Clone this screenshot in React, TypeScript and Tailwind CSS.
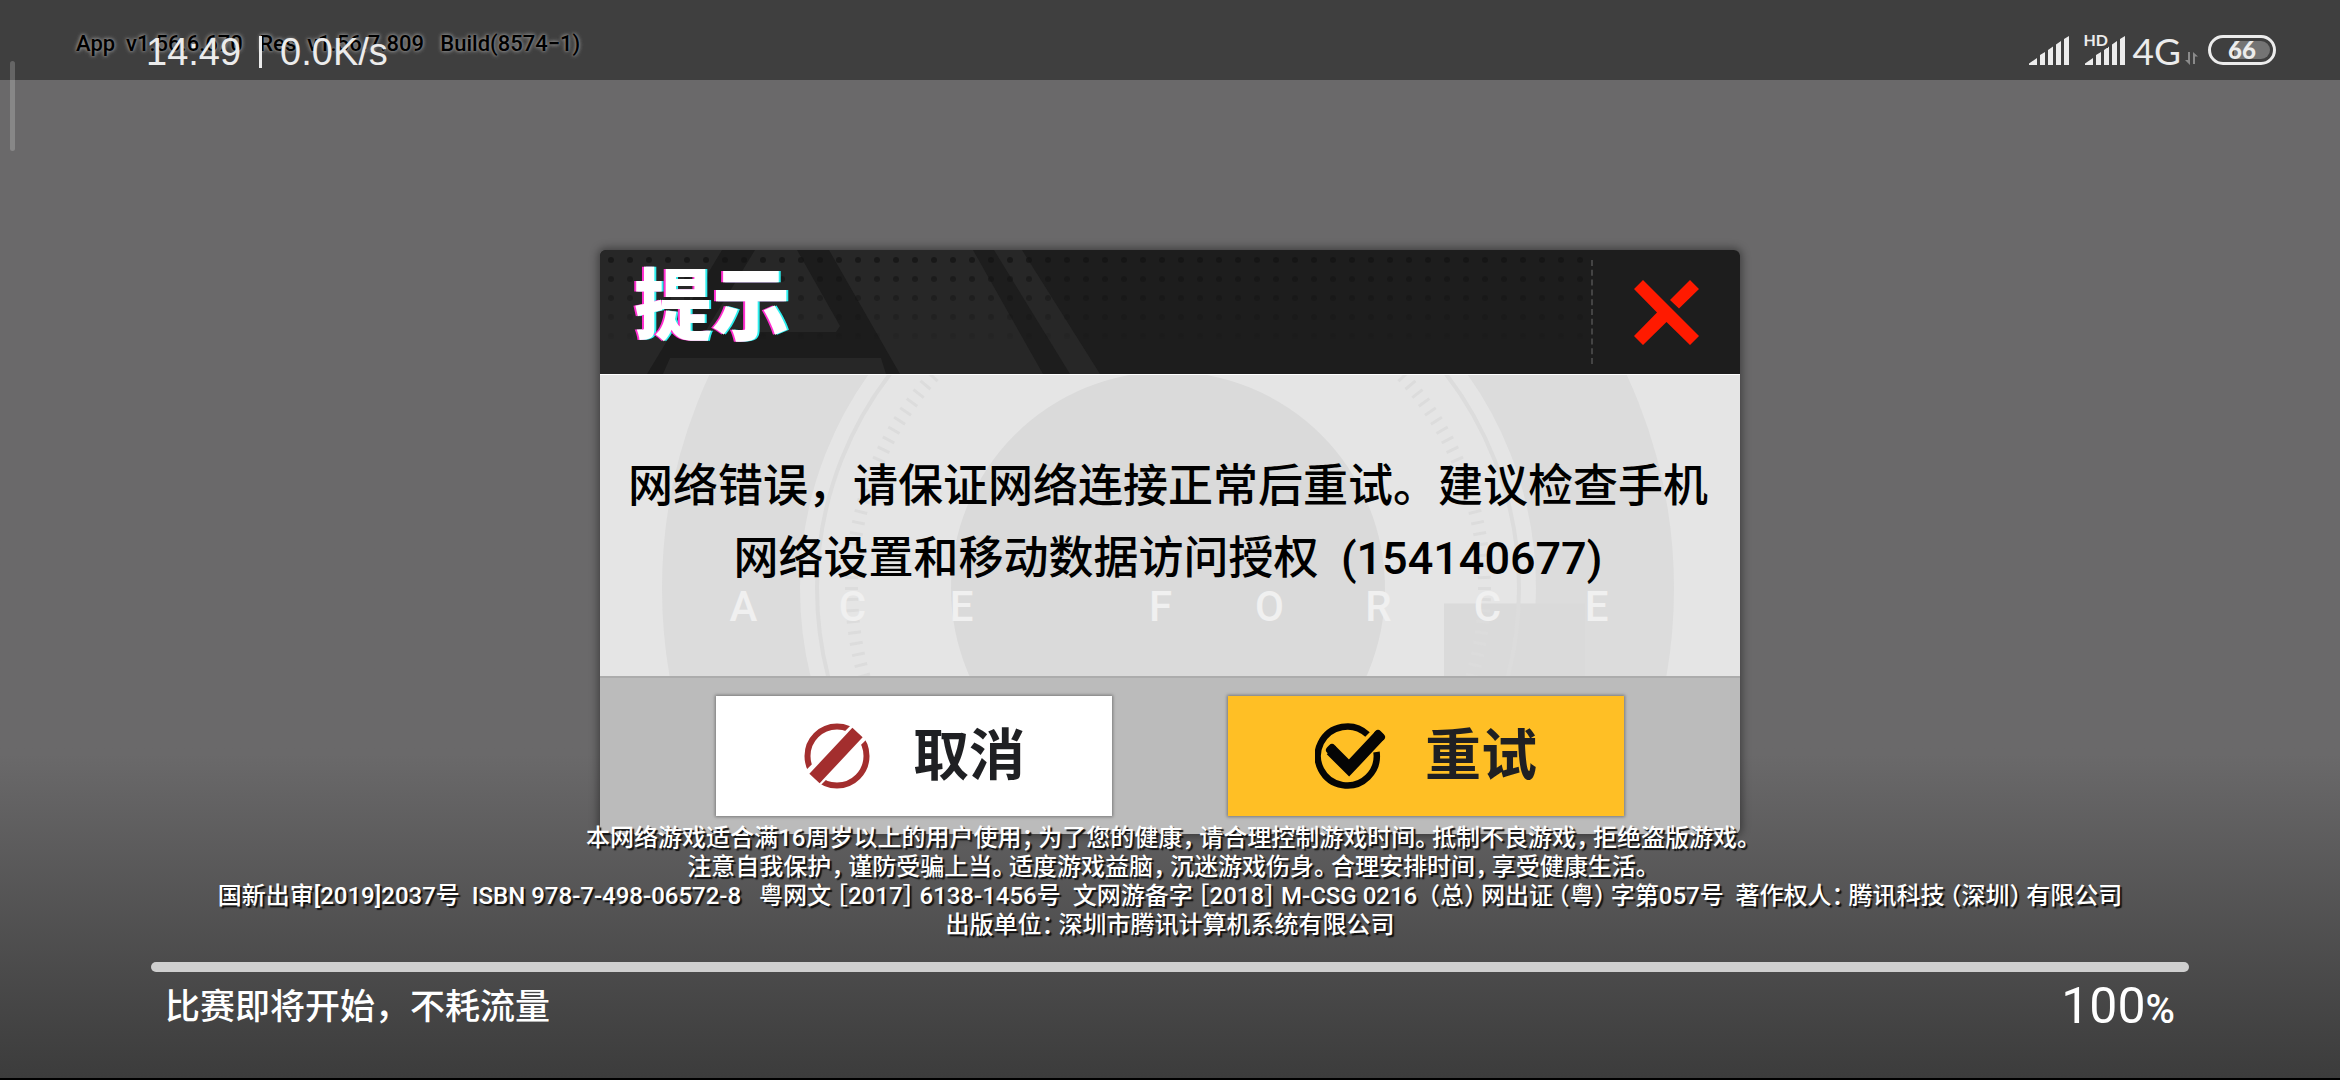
import type { ReactNode } from 'react';

const legalLines = [
    '本网络游戏适合满16周岁以上的用户使用；为了您的健康，请合理控制游戏时间。抵制不良游戏，拒绝盗版游戏。',
    '注意自我保护，谨防受骗上当。适度游戏益脑，沉迷游戏伤身。合理安排时间，享受健康生活。',
    '国新出审[2019]2037号  ISBN 978-7-498-06572-8   粤网文［2017］6138-1456号  文网游备字［2018］M-CSG 0216 （总）网出证（粤）字第057号  著作权人：腾讯科技（深圳）有限公司',
    '出版单位：深圳市腾讯计算机系统有限公司',
];

// half-width punctuation gets a thin space so the lines don't look cramped
const spaced = (text: string) => text.replace(/([，。；：）］])/g, '$1\u2009').replace(/([（［])/g, '\u2009$1');

const ticks = Array.from({ length: 180 }, (_, i) => i * 2);

function Signal() {
    return (
        <svg width="40" height="29" viewBox="0 0 40 29" fill="#ececec" aria-hidden="true">
            <path d="M0 27.500L8 22v7H0zM11 19l5-3v13h-5zM19 14l5-3.500V29h-5zM27 8.500L32 5v24h-5zM35 3l5-3v29h-5z" />
        </svg>
    );
}

function StatusBar() {
    return (
        <header className="relative flex h-20 items-center justify-between bg-[#3f3f3f] pt-5 pr-16 pl-[146px] text-[#ececec]">
            <div className="relative z-20 flex items-center gap-[18px] pt-1 font-['Liberation_Sans',sans-serif] text-[38px] leading-[40px]">
                <span>14:49</span>
                <span className="h-8 w-[3px] bg-[#ececec]"></span>
                <span>0.0K/s</span>
            </div>
            <div className="flex items-end">
                <div className="mr-4">
                    <Signal />
                </div>
                <div className="relative mr-2">
                    <span className="absolute -top-1 -left-px bg-[#3f3f3f] font-[Lato,sans-serif] text-[16px] leading-[16px] font-bold">HD</span>
                    <Signal />
                </div>
                <span className="mr-1 font-[Lato,sans-serif] text-[37px] leading-[28px]">4G</span>
                <svg className="mr-[10px]" width="13" height="13" viewBox="0 0 13 13" fill="#8a8a8a" aria-hidden="true">
                    <path d="M3 0h2v13L0 8h3zM8 0l5 4.500h-3V12H8z" />
                </svg>
                <div className="relative flex h-[30px] w-[68px] items-center justify-center rounded-full border-[3px] border-[#ececec]">
                    <span className="absolute top-[3px] right-[3px] h-[18px] w-9 rounded-r-full bg-[#747474]"></span>
                    <span className="relative font-[Lato,sans-serif] text-[24px] leading-[24px] font-black">66</span>
                </div>
            </div>
        </header>
    );
}

function HeaderArt() {
    return (
        <svg className="absolute inset-0 h-full w-full" viewBox="0 0 1140 124" preserveAspectRatio="xMinYMin slice" aria-hidden="true">
            <defs>
                <pattern id="dots" width="19" height="19" patternUnits="userSpaceOnUse">
                    <circle cx="11" cy="10" r="3" fill="#131313" />
                </pattern>
                <linearGradient id="fade" x1="0" y1="0" x2="0" y2="1">
                    <stop offset="0" stopColor="#ccc" />
                    <stop offset="1" stopColor="#000" />
                </linearGradient>
                <mask id="dotFade">
                    <rect width="983" height="100" fill="url(#fade)" />
                </mask>
            </defs>
            <path d="M0 0H373L443 124H0zM394 0H422L500 124H470z" fill="#272727" />
            <path
                fillRule="evenodd"
                fill="#1c1c1c"
                d="M122 0H229L300 124H47zM155 0H197L240 76L236 82H105zM70 108H281L286 124H63z"
            />
            <rect width="983" height="100" fill="url(#dots)" mask="url(#dotFade)" />
        </svg>
    );
}

function BodyArt() {
    return (
        <svg className="absolute inset-0 h-full w-full" viewBox="0 0 1140 302" preserveAspectRatio="xMidYMid slice" fill="none" aria-hidden="true">
            <circle cx="568" cy="214" r="437" stroke="#dcdcdc" strokeWidth="138" />
            <path d="M844 229H985V302H844z" fill="#dadada" />
            <circle cx="568" cy="214" r="351" stroke="#dcdcdc" strokeWidth="4" />
            {ticks.map((angle) => (
                <path key={angle} d="M878 214h13" stroke="#dcdcdc" strokeWidth="3" transform={`rotate(${angle} 568 214)`} />
            ))}
            <circle cx="568" cy="214" r="217" fill="#dadada" />
        </svg>
    );
}

function CancelIcon() {
    return (
        <svg width="74" height="66" viewBox="0 0 74 66" fill="none" aria-hidden="true">
            <circle cx="34" cy="33" r="29.500" stroke="#a32e2e" strokeWidth="6" />
            <path d="M7 58L59 6" stroke="#fff" strokeWidth="21" />
            <path d="M11.500 55.500L54.500 9.500" stroke="#a32e2e" strokeWidth="14" />
        </svg>
    );
}

function RetryIcon() {
    return (
        <svg width="74" height="66" viewBox="0 0 74 66" fill="none" aria-hidden="true">
            <path d="M52.500 11.500A29.500 29.500 0 1 0 61.500 29" stroke="#050505" strokeWidth="6.500" />
            <path d="M16 27L34 45L65 12" stroke="#050505" strokeWidth="12" />
            <path d="M15 27L17 25M63 11L66 14" stroke="#050505" strokeWidth="8" strokeLinecap="round" />
        </svg>
    );
}

function DialogButton({ color, icon, children }: { color: string; icon: ReactNode; children: ReactNode }) {
    return (
        <button
            type="button"
            className={`flex h-[120px] w-[396px] items-center justify-center gap-9 text-[56px] leading-[60px] font-bold text-[#1f2023] shadow-[0_0_3px_1px_rgba(0,0,0,0.35)] ${color}`}
        >
            {icon}
            <span>{children}</span>
        </button>
    );
}

function ErrorDialog() {
    return (
        <div className="absolute inset-0 flex items-center justify-center pt-[6px]">
            <section
                role="dialog"
                aria-labelledby="dialog-title"
                className="w-full max-w-[1140px] overflow-hidden rounded-md shadow-[0_0_8px_2px_rgba(0,0,0,0.4)]"
            >
                <div className="relative flex h-[124px] items-center justify-between bg-[#1d1d1d]">
                    <HeaderArt />
                    <h1
                        id="dialog-title"
                        className="relative pb-2 pl-[34px] text-[78px] leading-[80px] font-black text-white [text-shadow:-2px_0_0_#ff2fd0,2px_0_0_#2ff0f0]"
                    >
                        提示
                    </h1>
                    <div className="relative flex h-[104px] w-[149px] items-center justify-center border-l-2 border-dashed border-[#444]">
                        <button type="button" aria-label="关闭">
                            <svg width="65" height="65" viewBox="0 0 65 65" fill="#ff1a00" aria-hidden="true">
                                <path d="M9 0L65 56L56 65L32.500 42L9 65L0 56L23 32.500L0 9zM56 0L65 9L45 28.500L36 20z" />
                            </svg>
                        </button>
                    </div>
                </div>
                <div className="relative h-[302px] border-t border-white bg-[#e5e5e5] pt-[76px] pr-1">
                    <BodyArt />
                    <div className="absolute inset-x-0 top-[207px] flex justify-center text-center font-[Roboto,sans-serif] text-[42px] leading-[50px] font-medium text-[#f0f0f0]">
                        {'ACE FORCE'.split('').map((letter, key) => (
                            <span key={key} className={letter === ' ' ? 'w-[90px]' : 'w-[109px]'}>
                                {letter}
                            </span>
                        ))}
                    </div>
                    <p className="relative text-center text-[45px] leading-[72px] font-medium whitespace-pre-line text-black">
                        网络错误，请保证网络连接正常后重试。建议检查手机
                        <br />
                        网络设置和移动数据访问授权&nbsp;&nbsp;(154140677)
                    </p>
                </div>
                <div className="flex h-[158px] items-center justify-evenly border-t-2 border-[#acacac] bg-[#bbbbbb]">
                    <DialogButton color="bg-white" icon={<CancelIcon />}>
                        取消
                    </DialogButton>
                    <DialogButton color="bg-[#ffbf25]" icon={<RetryIcon />}>
                        重试
                    </DialogButton>
                </div>
            </section>
        </div>
    );
}

export default function App() {
    return (
        <div className="relative flex min-h-screen flex-col overflow-hidden border-b-2 border-black bg-linear-to-b from-[#6a696a] from-70% to-[#3c3c3c] font-[Roboto,'Noto_Sans_CJK_SC',sans-serif]">
            <StatusBar />
            <p className="absolute top-8 left-[76px] z-10 text-[22px] leading-[24px] font-medium whitespace-pre text-black [text-shadow:0_0_2px_#888,0_0_4px_#888,0_0_4px_#888]">
                App  v1.56.6.670   Res  v1.56.7.809   Build(8574−1)
            </p>
            <span className="absolute top-[61px] left-[10px] z-10 h-[90px] w-[5px] rounded-full bg-white/20"></span>

            <ErrorDialog />

            <footer className="relative mt-auto px-[151px] pb-[38px] text-white">
                <div className="text-center text-[24px] leading-[29px] font-medium whitespace-pre [font-feature-settings:'halt'] [text-shadow:2px_2px_1px_#111]">
                    {legalLines.map((line, key) => (
                        <p key={key}>{spaced(line)}</p>
                    ))}
                </div>
                <div
                    role="progressbar"
                    aria-label="加载进度"
                    aria-valuenow={100}
                    className="mt-[22px] h-[10px] rounded-full bg-[#cfcfcf]"
                ></div>
                <div className="flex h-[68px] items-center justify-between px-[14px] font-medium">
                    <p className="pt-1 text-[35px]">比赛即将开始，不耗流量</p>
                    <p className="text-[50px] font-normal">
                        100<span className="text-[40px] font-medium">%</span>
                    </p>
                </div>
            </footer>
        </div>
    );
}
